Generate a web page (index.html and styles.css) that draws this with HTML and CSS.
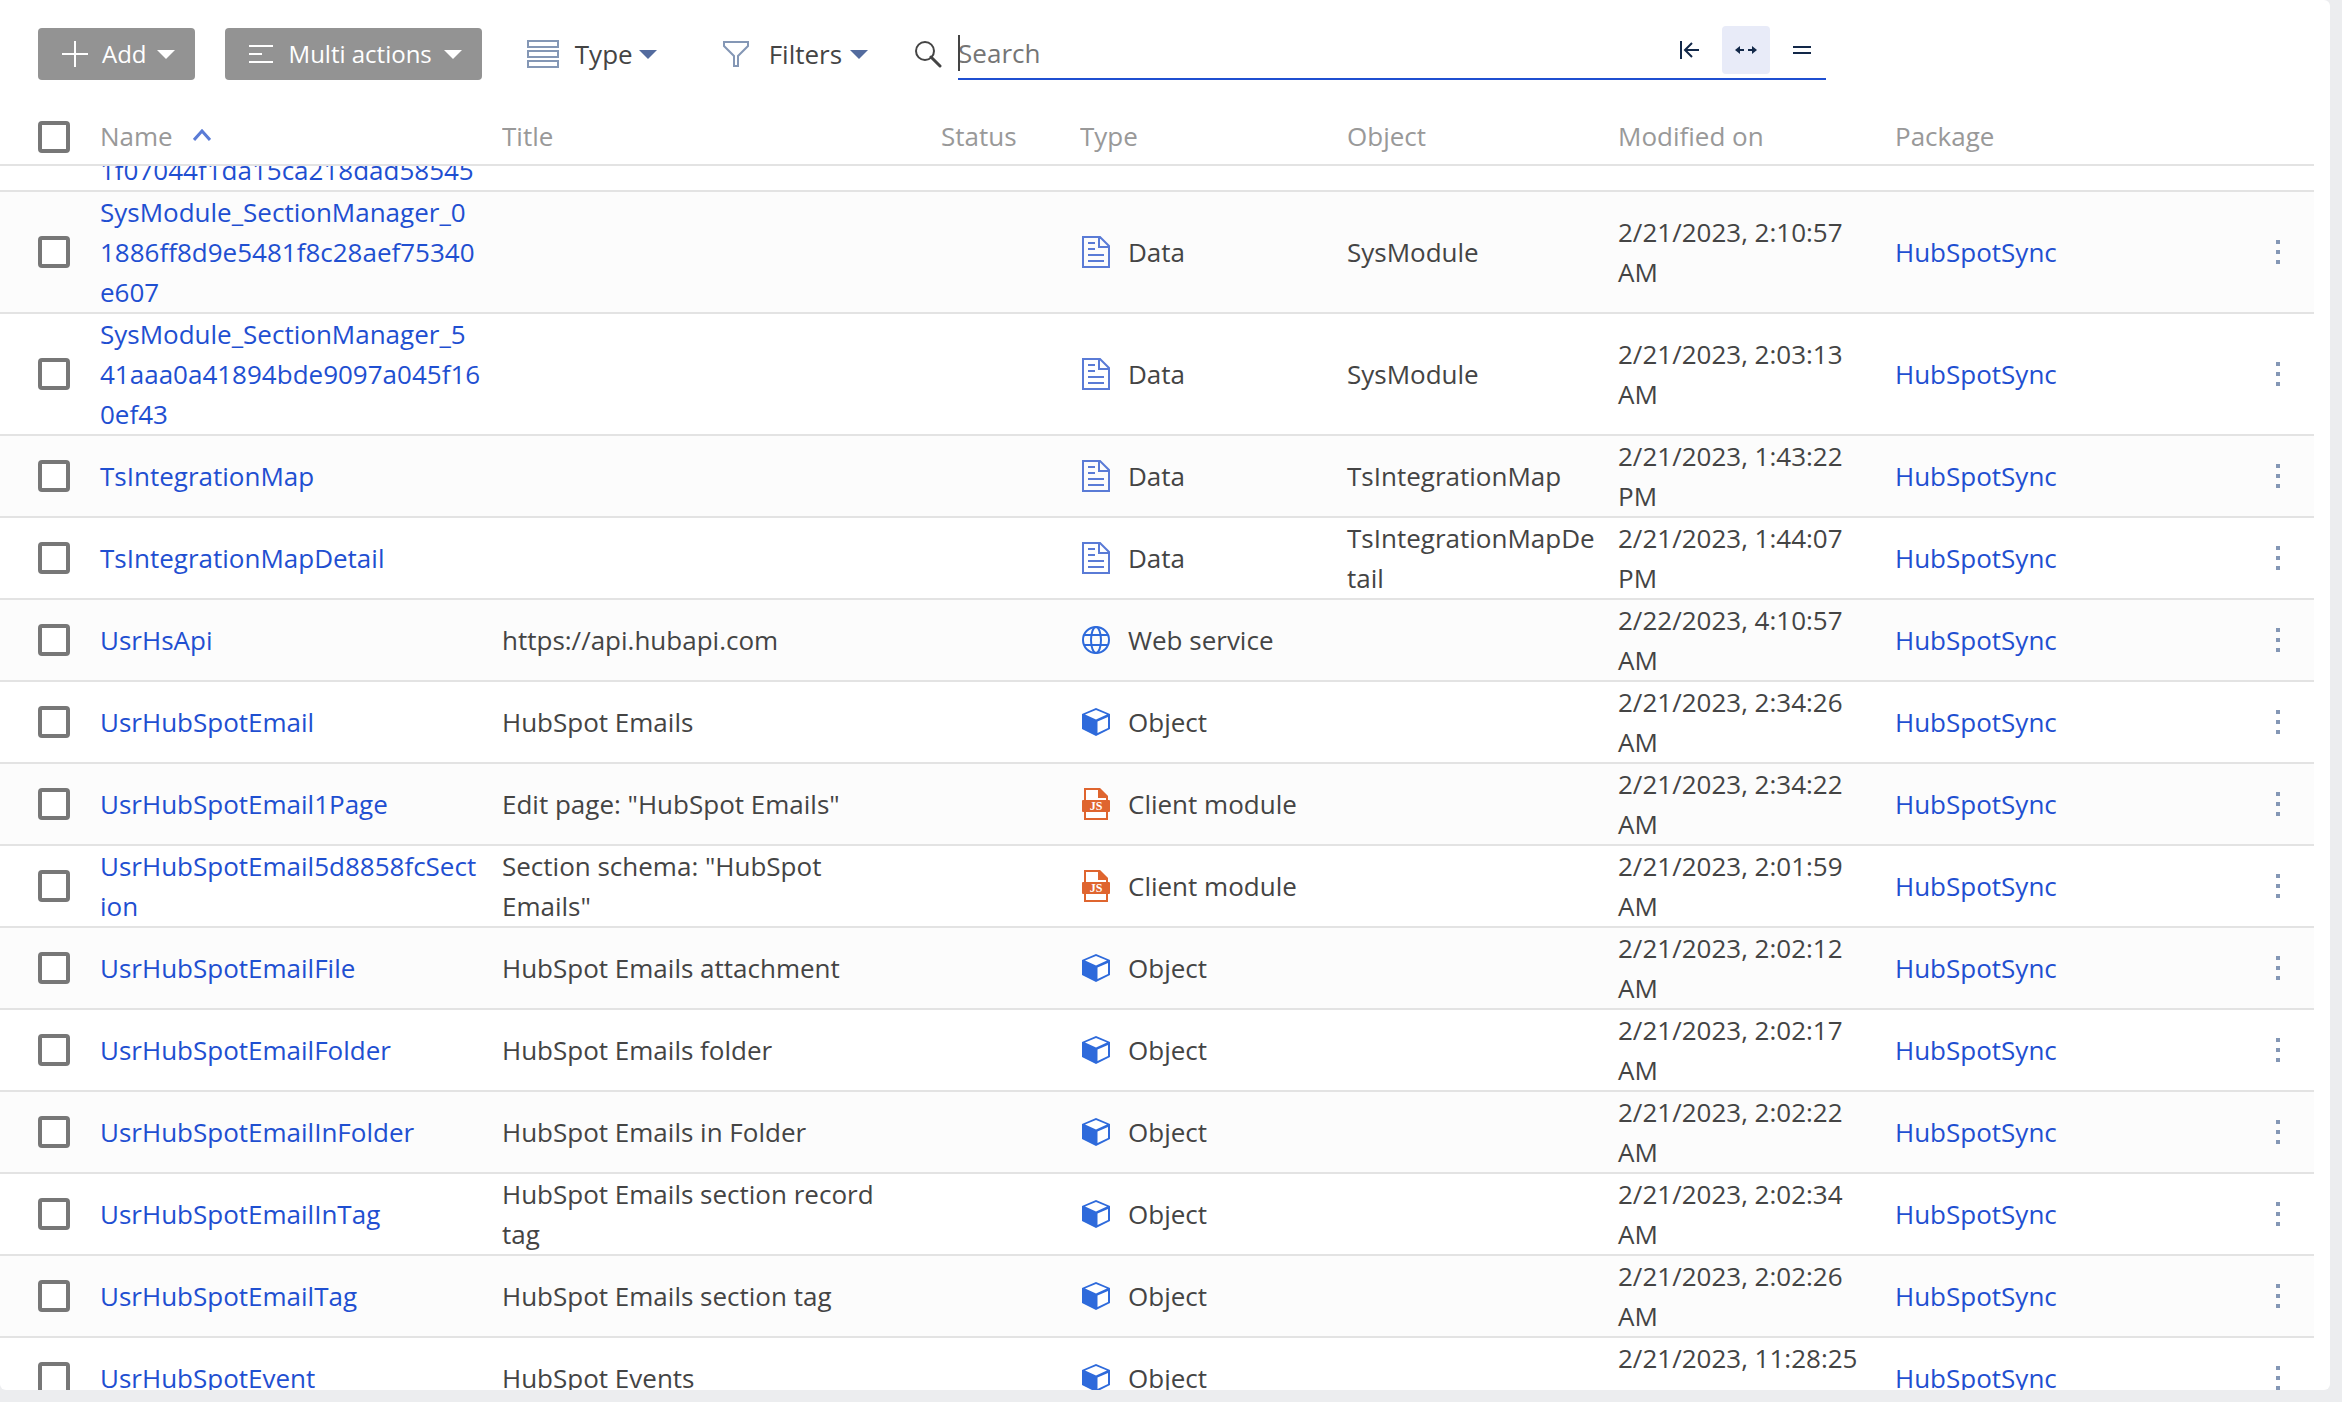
FILE: index.html
```
<!DOCTYPE html>
<html lang="en">
<head>
  <meta charset="UTF-8">
  <title>Configuration</title>
  <link rel="stylesheet" href="styles.css">
</head>
<body>
  <!-- Icons shared by the table rows -->
  <svg class="sprite" aria-hidden="true">
    <symbol id="icon-data" viewBox="0 0 28 32">
      <path d="M1 1H18L27 10V31H1Z M17 1V11H27 M6 7H13 M6 13H13 M6 19H22 M6 25H22" fill="none" stroke="#5a7bd6" stroke-width="2"/>
    </symbol>
    <symbol id="icon-web" viewBox="0 0 28 28">
      <g fill="none" stroke="#2e6adb" stroke-width="2">
        <circle cx="14" cy="14" r="13"/>
        <ellipse cx="14" cy="14" rx="5" ry="13"/>
        <path d="M2 9H26 M2 19H26"/>
      </g>
    </symbol>
    <symbol id="icon-object" viewBox="0 0 28 28">
      <path d="M14 0L28 6V21L14 28L0 21V6Z" fill="#2e6adb"/>
      <path d="M14 2L25 6.500L14 11.500L3 6.500Z M15.500 13.500L26 9V20L15.500 25Z" fill="#fff"/>
    </symbol>
    <symbol id="icon-client" viewBox="0 0 28 32">
      <path d="M3 1H17L25 9V31H3Z" fill="#fff" stroke="#df652f" stroke-width="2"/>
      <path d="M16 0H18L26 8V10H16Z" fill="#df652f"/>
      <rect y="12" width="28" height="12" rx="1" fill="#df652f"/>
      <text x="14" y="22" text-anchor="middle" class="js-label">JS</text>
    </symbol>
  </svg>

  <main class="card">
    <div class="toolbar">
      <button type="button" class="btn btn-add">
        <svg width="26" height="26"><path d="M13 0V26 M0 13H26" stroke="#fff" stroke-width="2"/></svg>
        Add
        <span class="arrow"></span>
      </button>
      <button type="button" class="btn btn-multi">
        <svg width="24" height="18"><path d="M0 1H24 M0 9H13 M0 17H24" stroke="#fff" stroke-width="2"/></svg>
        Multi actions
        <span class="arrow"></span>
      </button>
      <button type="button" class="menu menu-type">
        <svg width="32" height="28"><path d="M1 1H31V7H1Z M1 11H31V17H1Z M1 21H31V27H1Z" fill="none" stroke="#8497b5" stroke-width="2"/></svg>
        Type
        <span class="arrow"></span>
      </button>
      <button type="button" class="menu menu-filters">
        <svg width="26" height="26"><path d="M1 1H25V5L15 15V25H11V15L1 5Z" fill="none" stroke="#8497b5" stroke-width="2"/></svg>
        Filters
        <span class="arrow"></span>
      </button>
      <label class="search-icon" for="search" aria-label="Search">
        <svg width="28" height="28"><circle cx="11" cy="11" r="9" fill="none" stroke="#444" stroke-width="2"/><path d="M17 17L26 26" stroke="#444" stroke-width="3" stroke-linecap="round"/></svg>
      </label>
      <div class="search">
        <input type="text" id="search" class="search-input" placeholder="Search">
        <button type="button" class="mode" aria-label="Starts with">
          <svg width="20" height="18"><path d="M1 0V18 M19 9H5 M12 2L5 9L12 16" fill="none" stroke="#122849" stroke-width="2"/></svg>
        </button>
        <button type="button" class="mode active" aria-label="Contains">
          <svg width="22" height="8"><path d="M0 4L5 0V3H9V5H5V8Z M22 4L17 0V3H13V5H17V8Z" fill="#122849"/></svg>
        </button>
        <button type="button" class="mode" aria-label="Equals">
          <svg width="18" height="8"><path d="M0 1H18 M0 7H18" stroke="#122849" stroke-width="2"/></svg>
        </button>
      </div>
    </div>

    <div class="grid" id="grid">
      <table>
        <colgroup>
          <col class="col-check">
          <col class="col-name">
          <col class="col-title">
          <col class="col-status">
          <col class="col-type">
          <col class="col-object">
          <col class="col-modified">
          <col>
          <col class="col-menu">
        </colgroup>
        <thead>
          <tr>
            <th class="check"><input type="checkbox" aria-label="Select all"></th>
            <th>Name <svg class="sort" width="18" height="12"><path d="M1 11L9 2L17 11" fill="none" stroke="#5a7bd6" stroke-width="3"/></svg></th>
            <th>Title</th>
            <th>Status</th>
            <th>Type</th>
            <th>Object</th>
            <th>Modified on</th>
            <th>Package</th>
            <th></th>
          </tr>
        </thead>
        <tbody id="rows">
          <tr>
            <td></td>
            <td><a href="#">1f07044f1da15ca218dad58545</a></td>
            <td></td><td></td><td></td><td></td><td></td><td></td><td></td>
          </tr>
        </tbody>
      </table>
    </div>
  </main>

  <script src="script.js"></script>
</body>
</html>
```

FILE: styles.css
```
* {
  box-sizing: border-box;
}
body {
  margin: 0;
  height: 100vh;
  padding: 0 12px 12px 0;
  background: #ecedef;
  color: #444;
  font-family: "Open Sans", "Noto Sans", sans-serif;
  font-size: 26px;
  line-height: 40px;
}
a {
  color: #1f4fd1;
  text-decoration: none;
}
button {
  font: inherit;
  color: inherit;
  border: 0;
  background: none;
  padding: 0;
}
svg {
  flex: none;
}
.sprite {
  display: none;
}
.card {
  display: flex;
  flex-direction: column;
  height: 100%;
  padding-right: 16px;
  background: #fff;
  border-radius: 0 6px 6px 6px;
  overflow: hidden;
}

/* Toolbar */
.toolbar {
  display: flex;
  align-items: center;
  height: 110px;
  padding: 0 38px 2px;
  flex: none;
}
.btn,
.menu {
  display: flex;
  align-items: center;
}
.btn {
  height: 52px;
  padding: 0 20px 0 24px;
  border-radius: 4px;
  background: #939393;
  color: #fff;
  font-size: 24px;
}
.btn-add {
  gap: 14px;
  margin-right: 30px;
}
.btn-multi {
  gap: 16px;
  margin-right: 45px;
}
.arrow {
  margin-left: -4px;
  border: 9px solid transparent;
  border-top-color: currentColor;
  border-bottom: 0;
}
.menu .arrow {
  border-top-color: #536b9e;
}
.menu-type {
  gap: 16px;
  margin-right: 66px;
}
.menu-type .arrow {
  margin-left: -10px;
}
.menu-filters {
  gap: 20px;
  margin-right: 46px;
}
.menu-filters .arrow {
  margin-left: -12px;
}
.search-icon {
  display: flex;
  margin-right: 16px;
}
.search {
  position: relative;
  display: flex;
  align-items: center;
  width: 868px;
  height: 54px;
  margin-bottom: 2px;
  padding-bottom: 4px;
  border-bottom: 2px solid #1f4fd1;
}
/* text cursor of the focused field */
.search::before {
  content: "";
  position: absolute;
  left: 0;
  top: 9px;
  width: 2px;
  height: 36px;
  background: #444;
}
.search-input {
  flex: 1;
  min-width: 0;
  height: 48px;
  padding: 6px 0 0;
  border: 0;
  outline: 0;
  background: none;
  color: #444;
  font: inherit;
}
.search-input::placeholder {
  color: #757575;
}
.mode {
  display: flex;
  align-items: center;
  justify-content: center;
  width: 48px;
  height: 48px;
  margin-left: 8px;
  border-radius: 4px;
}
.mode.active {
  background: #e8ebf8;
}

/* Table */
.grid {
  flex: 1;
  min-height: 0;
  overflow: auto;
  scrollbar-width: none;
}
table {
  width: 100%;
  table-layout: fixed;
  border-collapse: separate;
  border-spacing: 0;
}
.col-check { width: 100px; }
.col-name { width: 402px; }
.col-title { width: 439px; }
.col-status { width: 139px; }
.col-type { width: 267px; }
.col-object { width: 271px; }
.col-modified { width: 277px; }
.col-menu { width: 72px; }
th {
  position: sticky;
  top: 0;
  height: 56px;
  padding: 0 16px 2px 0;
  background: #fff;
  border-bottom: 2px solid #e3e3e3;
  color: #999;
  font-weight: 400;
  text-align: left;
  white-space: nowrap;
}
td {
  padding: 0 20px 0 0;
  border-bottom: 2px solid #e3e3e3;
  overflow-wrap: anywhere;
}
td.title {
  padding-right: 40px;
}
tbody tr:nth-child(even) {
  background: #fcfcfc;
}
.sort {
  margin-left: 14px;
  vertical-align: 5px;
}
td.check,
th.check {
  padding: 0 0 0 38px;
}
input[type="checkbox"] {
  appearance: none;
  display: block;
  width: 32px;
  height: 32px;
  margin: 0;
  border: 4px solid #777;
  border-radius: 4px;
  background: #fff;
}
.type {
  display: flex;
  align-items: center;
  gap: 18px;
  padding-left: 2px;
}
.js-label {
  font: 700 12px "Liberation Serif", serif;
  fill: #fff;
}
.row-menu {
  display: block;
  width: 24px;
  height: 24px;
  margin-left: 24px;
}
.row-menu svg {
  display: block;
  margin: 0 auto;
}
```

FILE: script.js
```
// name, title, type, object, modified on
const items = [
  ["SysModule_SectionManager_01886ff8d9e5481f8c28aef75340e607", "", "Data", "SysModule", "2/21/2023, 2:10:57 AM"],
  ["SysModule_SectionManager_541aaa0a41894bde9097a045f160ef43", "", "Data", "SysModule", "2/21/2023, 2:03:13 AM"],
  ["TsIntegrationMap", "", "Data", "TsIntegrationMap", "2/21/2023, 1:43:22 PM"],
  ["TsIntegrationMapDetail", "", "Data", "TsIntegrationMapDetail", "2/21/2023, 1:44:07 PM"],
  ["UsrHsApi", "https://api.hubapi.com", "Web service", "", "2/22/2023, 4:10:57 AM"],
  ["UsrHubSpotEmail", "HubSpot Emails", "Object", "", "2/21/2023, 2:34:26 AM"],
  ["UsrHubSpotEmail1Page", "Edit page: \"HubSpot Emails\"", "Client module", "", "2/21/2023, 2:34:22 AM"],
  ["UsrHubSpotEmail5d8858fcSection", "Section schema: \"HubSpot Emails\"", "Client module", "", "2/21/2023, 2:01:59 AM"],
  ["UsrHubSpotEmailFile", "HubSpot Emails attachment", "Object", "", "2/21/2023, 2:02:12 AM"],
  ["UsrHubSpotEmailFolder", "HubSpot Emails folder", "Object", "", "2/21/2023, 2:02:17 AM"],
  ["UsrHubSpotEmailInFolder", "HubSpot Emails in Folder", "Object", "", "2/21/2023, 2:02:22 AM"],
  ["UsrHubSpotEmailInTag", "HubSpot Emails section record tag", "Object", "", "2/21/2023, 2:02:34 AM"],
  ["UsrHubSpotEmailTag", "HubSpot Emails section tag", "Object", "", "2/21/2023, 2:02:26 AM"],
  ["UsrHubSpotEvent", "HubSpot Events", "Object", "", "2/21/2023, 11:28:25 AM"]
];

// icon id and height for each schema type
const icons = {
  "Data": ["icon-data", 32],
  "Web service": ["icon-web", 28],
  "Object": ["icon-object", 28],
  "Client module": ["icon-client", 32]
};

const rows = document.getElementById("rows");
items.forEach(([name, title, type, object, modified]) => {
  const [icon, height] = icons[type];
  // Section names carry a long hash: allow a break after its first character
  const label = name.replace(/(Manager_.)/, "$1<wbr>");
  rows.insertAdjacentHTML("beforeend", `
    <tr>
      <td class="check"><input type="checkbox" aria-label="Select ${name}"></td>
      <td><a href="#">${label}</a></td>
      <td class="title">${title}</td>
      <td></td>
      <td><div class="type"><svg width="28" height="${height}"><use href="#${icon}"/></svg>${type}</div></td>
      <td>${object}</td>
      <td>${modified}</td>
      <td><a href="#">HubSpotSync</a></td>
      <td><button type="button" class="row-menu" aria-label="Actions"><svg width="4" height="24"><path d="M0 0H4V4H0Z M0 10H4V14H0Z M0 20H4V24H0Z" fill="#8497b5"/></svg></button></td>
    </tr>`);
});

// The list opens slightly scrolled
document.getElementById("grid").scrollTop = 16;
```
